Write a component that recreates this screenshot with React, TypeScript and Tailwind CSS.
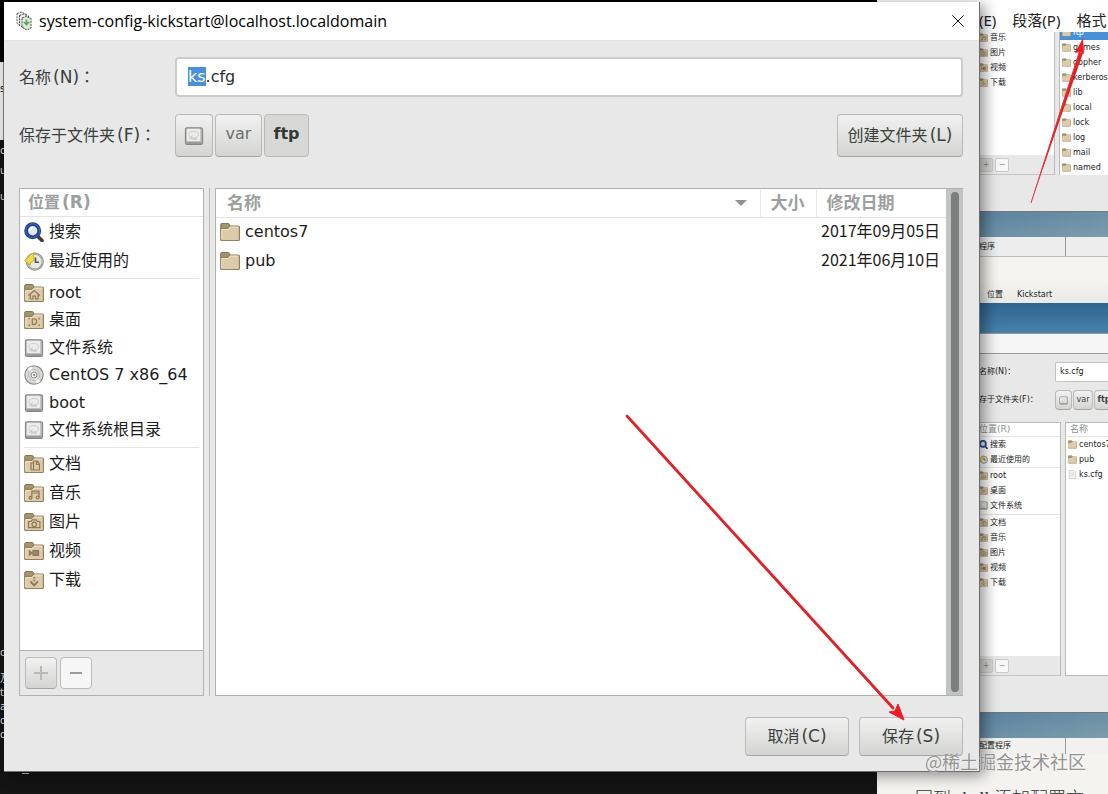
import { useEffect, useRef } from "react";
import type { ReactNode } from "react";

type IconName =
  | "search" | "recent" | "home" | "desktop" | "drive" | "disc"
  | "documents" | "music" | "pictures" | "videos" | "downloads" | "folder" | "file";

type Place = { icon: IconName; label: string };

const shortcuts: Place[] = [
  { icon: "search", label: "搜索" },
  { icon: "recent", label: "最近使用的" },
];
const devices: Place[] = [
  { icon: "home", label: "root" },
  { icon: "desktop", label: "桌面" },
  { icon: "drive", label: "文件系统" },
  { icon: "disc", label: "CentOS 7 x86_64" },
  { icon: "drive", label: "boot" },
  { icon: "drive", label: "文件系统根目录" },
];
const bookmarks: Place[] = [
  { icon: "documents", label: "文档" },
  { icon: "music", label: "音乐" },
  { icon: "pictures", label: "图片" },
  { icon: "videos", label: "视频" },
  { icon: "downloads", label: "下载" },
];
const files = [
  { name: "centos7", date: "2017年09月05日" },
  { name: "pub", date: "2021年06月10日" },
];

const emblems: Partial<Record<IconName, ReactNode>> = {
  home: <path d="M4.500 12.500 10.200 7.500l5.700 5M6.300 11.500V16h2.600v-3h2.600v3h2.600v-4.500" />,
  desktop: (
    <>
      <path d="M8.300 9h2.200c1.300 0 2 1 2 2.500s-.7 2.800-2 2.800H8.300z" />
      <path d="M4.500 8.500h1.500M4.500 15.200h1.500M14.500 8.500h1.500M14.500 15.200h1.500" strokeWidth="1.600" />
    </>
  ),
  documents: <path d="M7 16V9h2M7 16h3M9.500 7h3.500l2.500 3v6H9.500zM12.500 7v3.500h3" />,
  music: (
    <>
      <path d="M7.800 14.500V8.200h7.200v6M7.800 10h7.200" />
      <circle cx="6.500" cy="14.700" r="1.400" />
      <circle cx="13.700" cy="14.400" r="1.400" />
    </>
  ),
  pictures: (
    <>
      <path d="M4.500 9.500h2.700l1-1.700h4l1 1.700h2.700v6.200H4.500z" />
      <circle cx="10.200" cy="12.400" r="2.200" />
    </>
  ),
  videos: <path d="M9 9.500h5.500v5H9zM5.500 10l2.500 2-2.500 2z" fill="#9b8768" />,
  downloads: <path d="M10.200 7v1.400M10.200 9.800v1.500M6.500 11.500l3.700 3.800 3.700-3.800" strokeWidth="1.900" />,
};

function Icon({ name, className }: { name: IconName; className: string }) {
  if (name === "search")
    return (
      <svg viewBox="0 0 20 20" className={className} aria-hidden="true">
        <path d="m14 14.500 4 4" stroke="#3b3f45" strokeWidth="3.600" strokeLinecap="round" />
        <circle cx="8.700" cy="8.700" r="6.600" fill="#dfe8f5" stroke="#27408f" strokeWidth="3.800" />
        <circle cx="8.700" cy="8.700" r="6.900" fill="none" stroke="#4a68b8" strokeWidth="1" />
        <path d="M5.800 8.500a3 3 0 0 1 3-3" stroke="#fff" strokeWidth="1.600" fill="none" />
      </svg>
    );
  if (name === "recent")
    return (
      <svg viewBox="0 0 20 20" className={className} aria-hidden="true">
        <circle cx="10.800" cy="10.600" r="8" fill="#e9e9e4" stroke="#8f8f8a" strokeWidth="2.200" />
        <circle cx="10.800" cy="10.600" r="7.800" fill="none" stroke="#c9c9c4" strokeWidth=".8" />
        <path d="M11.500 6.500V11.200H15" stroke="#55554f" strokeWidth="1.600" fill="none" />
        <path d="M.6 9.500 4.500 6c.8-2.200 3-3.700 6-4-1.500 1.800-1 2.800-.6 4.300.7 2.500-1.200 4.700-3.500 5.500l-.2 2.400z" fill="#f0dc48" stroke="#b89b1b" strokeWidth=".8" />
      </svg>
    );
  if (name === "disc")
    return (
      <svg viewBox="0 0 20 20" className={className} aria-hidden="true">
        <circle cx="10" cy="10" r="9.200" fill="#d9d9d7" stroke="#868684" strokeWidth="1.100" />
        <path d="M10 10 3.500 4a9 9 0 0 1 4-2.500zM10 10l6.500 6a9 9 0 0 1-4 2.500z" fill="#fafafa" />
        <circle cx="10" cy="10" r="5.500" fill="none" stroke="#b5b5b2" strokeWidth=".8" />
        <circle cx="10" cy="10" r="3" fill="#f5f5f5" stroke="#8e8e8b" />
        <circle cx="10" cy="10" r="1" fill="#777" />
      </svg>
    );
  if (name === "drive")
    return (
      <svg viewBox="0 0 20 20" className={className} aria-hidden="true">
        <rect x="1.500" y="1.800" width="17" height="16.600" rx="1.600" fill="#bcbebc" stroke="#858785" strokeWidth="1.200" />
        <rect x="2.800" y="2.800" width="13.400" height="12.200" rx="1" fill="#ececeb" />
        <path d="M2.500 17h15" stroke="#8d8f8d" strokeWidth="1.400" />
        <ellipse cx="9.700" cy="8.700" rx="4.800" ry="3.200" fill="none" stroke="#cbcdcb" />
        <path d="m5 13 3.500-3.200M7 13h6" stroke="#b9bbb9" />
      </svg>
    );
  if (name === "file")
    return (
      <svg viewBox="0 0 20 20" className={className} aria-hidden="true">
        <path d="M3 1h10l4 4v14H3z" fill="#f4f4f2" stroke="#a8a8a5" />
        <path d="M6 7h8M6 10h8M6 13h8" stroke="#c4c4c1" />
      </svg>
    );
  return (
    <svg viewBox="0 0 20 20" className={className} aria-hidden="true">
      <path d="M.7 9V2.500c0-.6.4-1 1-1h6.500c.6 0 .9.300 1.100.8l.8 1.700v5z" fill="#a3956f" stroke="#877551" />
      <path d="M.7 17.500V7.200c0-.6.4-.9 1-.9h6L9.800 4h8.500c.7 0 1.100.4 1.100 1v12.500c0 .6-.4 1-1 1H1.700c-.6 0-1-.4-1-1z" fill="#dccbab" stroke="#94805c" strokeWidth="1.200" />
      <path d="M1.800 17V7.500h6.300L10.200 5.200h8" fill="none" stroke="#efe3ca" />
      <g fill="none" stroke="#8e7957" strokeWidth="1.200">{emblems[name]}</g>
    </svg>
  );
}

const buttonLook =
  "flex items-center justify-center rounded-[4px] border border-[#b9bbb8] border-b-[#a3a5a2] bg-linear-to-b from-[#f1f1f1] to-[#d4d5d2] text-[#3a3f3d]";

function Mnemonic({ children }: { children: string }) {
  return <span className="ml-[2px] text-[17px]">({children})</span>;
}

function PlaceGroup({ places, className }: { places: Place[]; className: string }) {
  return (
    <ul className={className}>
      {places.map((p) => (
        <li key={p.label} className="flex min-h-0 items-center gap-[5px] pl-1 text-base leading-5 text-[#1c1c1c]">
          <Icon name={p.icon} className="size-5 shrink-0" />
          <span className="whitespace-nowrap">{p.label}</span>
        </li>
      ))}
    </ul>
  );
}

function Rule() {
  return <hr className="mx-1 mt-[3px] border-[#e3e3e3]" />;
}

function SaveDialog() {
  const nameRef = useRef<HTMLInputElement>(null);
  useEffect(() => {
    nameRef.current?.focus();
    nameRef.current?.setSelectionRange(0, 2);
  }, []);

  return (
    <section
      role="dialog"
      aria-labelledby="dialog-title"
      className="absolute top-[2px] right-[128px] bottom-[22px] left-1 flex flex-col border-r border-b border-[#6c6c6c] bg-[#e8e8e8] shadow-[4px_3px_14px_rgba(0,0,0,0.45)]"
    >
      <header className="flex h-[39px] shrink-0 items-center border-b border-[#e2e2e2] bg-white pr-3 pl-3">
        <svg viewBox="0 0 16 20" className="h-5 w-4" fill="none" aria-hidden="true">
          <path d="M1 2.500 5 1l5 2v11l-4 1.500-5-3z" fill="#f2f2f2" stroke="#555" strokeDasharray="2 1" />
          <path d="m3.500 4.500 4-1.500 5 2v11l-4 1.500-5-3z" fill="#e7ece7" stroke="#444" strokeDasharray="2 1" />
          <path d="m6 7 4-1.500 5 2V17l-4 2-5-3z" fill="#dfe5df" stroke="#4d4d4d" strokeDasharray="2 1" />
          <path d="M10.500 8.500v5M8 11l2.500 2.700 2.500-2.700" stroke="#4cab4c" strokeWidth="1.500" />
        </svg>
        <h1 id="dialog-title" className="ml-[7px] flex-1 font-['Open_Sans'] text-base text-black">
          system-config-kickstart@localhost.localdomain
        </h1>
        <button type="button" aria-label="关闭" className="p-[3px]">
          <svg viewBox="0 0 12 12" className="size-3" stroke="#111" aria-hidden="true">
            <path d="M.3.3l11.400 11.400M11.700.3.3 11.700" />
          </svg>
        </button>
      </header>

      <form className="flex min-h-0 flex-1 flex-col pt-4 pr-4 pb-[15px] pl-[15px]" onSubmit={(e) => e.preventDefault()}>
        <div className="flex items-center">
          <label htmlFor="file-name" className="w-[156px] shrink-0 font-['DejaVu_Sans','Noto_Sans_CJK_TC',sans-serif] leading-6 text-[#3a3f3d]">
            名称<Mnemonic>N</Mnemonic>：
          </label>
          <input
            id="file-name"
            ref={nameRef}
            defaultValue="ks.cfg"
            className="h-10 min-w-0 flex-1 rounded-[4px] border-2 border-[#cbccca] bg-white px-[11px] pb-[2px] text-[#2b2f2e] caret-transparent outline-none selection:bg-[#4a90d9] selection:text-white"
          />
        </div>

        <div className="mt-[17px] flex items-center">
          <span className="w-[156px] shrink-0 font-['DejaVu_Sans','Noto_Sans_CJK_TC',sans-serif] leading-6 text-[#3a3f3d]">
            保存于文件夹<Mnemonic>F</Mnemonic>：
          </span>
          <nav className="flex h-[43px] gap-[2px]" aria-label="路径">
            <button type="button" aria-label="文件系统" className={`w-[38px] ${buttonLook}`}>
              <Icon name="drive" className="size-5" />
            </button>
            <button type="button" className={`w-[47px] pb-1 ${buttonLook}`}>
              <span className="text-[#6b6f6d]">var</span>
            </button>
            <button type="button" className="w-[45px] rounded-[4px] border border-[#b9bbb8] bg-[#d8d9d6] pb-1 font-bold text-[#333836]">
              ftp
            </button>
          </nav>
          <button type="button" className={`ml-auto h-[43px] w-[126px] ${buttonLook}`}>创建文件夹<Mnemonic>L</Mnemonic></button>
        </div>

        <div className="mt-[31px] flex min-h-0 flex-1">
          <aside className="flex w-[185px] shrink-0 flex-col border border-[#b0b2b0] bg-white">
            <h2 className="h-7 shrink-0 border-b border-[#e3e3e3] pl-2 leading-[27px] font-bold text-[#9b9f9d]">
              位置<Mnemonic>R</Mnemonic>
            </h2>
            <PlaceGroup places={shortcuts} className="grid h-[58px] shrink-0" />
            <Rule />
            <PlaceGroup places={devices} className="grid h-[165px] shrink-0" />
            <Rule />
            <PlaceGroup places={bookmarks} className="mt-[2px] grid h-36 shrink-0" />
            <footer className="mt-auto flex shrink-0 gap-[3px] border-t border-[#b0b2b0] bg-[#e8e8e8] px-[5px] py-[6px]">
              <button type="button" aria-label="添加" className={`size-8 ${buttonLook}`}>
                <svg viewBox="0 0 14 14" className="size-[14px]" stroke="#b8bab8" strokeWidth="2" aria-hidden="true"><path d="M7 0v14M0 7h14" /></svg>
              </button>
              <button type="button" aria-label="移除" className="flex size-8 items-center justify-center rounded-[4px] border border-[#b9bbb8] bg-[#f6f6f6]">
                <svg viewBox="0 0 14 4" className="h-1 w-[14px]" stroke="#9a9c9a" strokeWidth="2" aria-hidden="true"><path d="M1 2h12" /></svg>
              </button>
            </footer>
          </aside>
          <div className="w-[11px] shrink-0 border-r border-transparent">
            <div className="ml-[5px] h-full w-px bg-[#b8bab8]" />
          </div>
          <div className="flex min-w-0 flex-1 border border-r-0 border-[#b0b2b0] bg-white">
            <div className="min-w-0 flex-1">
              <table className="w-full table-fixed border-collapse text-left">
                <colgroup>
                  <col />
                  <col className="w-14" />
                  <col className="w-[130px]" />
                </colgroup>
                <thead>
                  <tr className="h-7 border-b border-[#e3e3e3] text-[17px] leading-5 text-[#9b9f9d]">
                    <th className="p-0 pr-[13px] pl-[11px]">
                      <div className="flex items-center justify-between">
                        名称
                        <svg viewBox="0 0 12 6" className="h-[6px] w-3" fill="#8f9391" aria-hidden="true"><path d="M0 0h12L6 6z" /></svg>
                      </div>
                    </th>
                    <th className="border-l border-[#e8e8e8] p-0 pl-[10px]">大小</th>
                    <th className="border-l border-[#e8e8e8] p-0 pl-[10px]">修改日期</th>
                  </tr>
                </thead>
                <tbody className="leading-5 text-[#1c1c1c]">
                  {files.map((f) => (
                    <tr key={f.name} className="h-[29px]">
                      <td className="p-0 pl-1">
                        <div className="flex items-center gap-[5px]">
                          <Icon name="folder" className="size-5" />
                          {f.name}
                        </div>
                      </td>
                      <td className="p-0" />
                      <td className="p-0 pb-[3px] pl-[5px] font-['Noto_Sans_CJK_SC',sans-serif] whitespace-nowrap">{f.date}</td>
                    </tr>
                  ))}
                </tbody>
              </table>
            </div>
            <div className="flex w-[17px] shrink-0 justify-center bg-[#c2c4c3] py-[3px]">
              <div className="w-2 rounded-full bg-[#7a7f7c]" />
            </div>
          </div>
        </div>

        <div className="mt-[21px] flex justify-end gap-[10px]">
          <button type="button" className={`h-[39px] w-[104px] ${buttonLook}`}>取消<Mnemonic>C</Mnemonic></button>
          <button type="submit" className={`h-[39px] w-[104px] ${buttonLook}`}>保存<Mnemonic>S</Mnemonic></button>
        </div>
      </form>
    </section>
  );
}

const miniRow = "flex h-[15px] items-center gap-[2px] whitespace-nowrap";
const miniSquare = "flex size-[14px] items-center justify-center rounded-[2px] border border-[#c9cac8]";

function MiniPlaces({ places }: { places: Place[] }) {
  return (
    <ul>
      {places.map((p) => (
        <li key={p.label} className={miniRow}>
          <Icon name={p.icon} className="size-[9px] shrink-0" />
          {p.label}
        </li>
      ))}
    </ul>
  );
}

function MiniFooter() {
  return (
    <div className="flex h-5 items-center gap-[2px] border-b border-[#c4c5c4] bg-[#e8e8e8] text-[#8d8f8d]">
      <span className={`bg-[#d8d9d6] ${miniSquare}`}>+</span>
      <span className={`bg-[#f8f8f8] ${miniSquare}`}>−</span>
    </div>
  );
}

function MiniTaskbar({ className, label }: { className: string; label: string }) {
  return (
    <div className={className}>
      <span className="flex h-full w-[87px] items-center border-r border-[#9a9a9a] whitespace-nowrap">{label}</span>
    </div>
  );
}

function DocumentPane() {
  return (
    <article className="flex w-[231px] shrink-0 flex-col overflow-hidden bg-[#f4f3f0]">
      <div className="flex h-8 shrink-0 items-end gap-4 bg-white pb-[1px] pl-[102px] font-['Noto_Sans','Noto_Sans_CJK_SC',sans-serif] text-[15px] leading-[22px] whitespace-nowrap text-[#222]">
        <span>(E)</span>
        <span>段落(P)</span>
        <span>格式</span>
      </div>
      <div className="ml-[102px] flex flex-col bg-[#e8e8e8] text-[8px] leading-3 text-[#222]">
        <div className="flex h-[143px] shrink-0 overflow-hidden">
          <div className="flex w-[76px] shrink-0 flex-col border-r border-[#b8bab8] bg-white">
            <div className="-mt-[2px]"><MiniPlaces places={bookmarks.slice(1)} /></div>
            <div className="mt-auto"><MiniFooter /></div>
          </div>
          <div className="ml-1 flex-1 overflow-hidden border-l border-[#b8bab8] bg-white">
            <ul className="-mt-[7px]">
              {["ftp", "games", "gopher", "kerberos", "lib", "local", "lock", "log", "mail", "named"].map((n) => (
                <li key={n} className={n === "ftp" ? `bg-[#4a90d9] pl-[2px] text-white ${miniRow}` : `pl-[2px] ${miniRow}`}>
                  <Icon name="folder" className="size-[9px] shrink-0" />
                  {n}
                </li>
              ))}
            </ul>
          </div>
        </div>
        <div className="h-[37px] shrink-0 border-b border-[#777]" />
        <div className="h-[25px] shrink-0 bg-linear-to-br from-[#5a83a0] to-[#7d9cab]" />
        <MiniTaskbar label="程序" className="h-5 shrink-0 border-b border-[#bbb] bg-[#ededed]" />
        <div className="flex h-[46px] shrink-0 items-end gap-[14px] bg-linear-to-b from-[#f5f4ef] from-50% to-[#e9e9e8] pb-[2px] pl-2">
          <span>位置</span>
          <span>Kickstart</span>
        </div>
        <div className="h-[30px] shrink-0 bg-linear-to-b from-[#30658f] to-[#4781ab]" />
        <div className="h-[21px] shrink-0 border-t border-b border-[#999] bg-[#f5f5f5]" />
        <div className="flex h-9 shrink-0 items-center justify-between">
          <span className="whitespace-nowrap">名称(N)：</span>
          <span className="flex h-5 w-[53px] items-center rounded-l-[2px] border border-r-0 border-[#c3c4c2] bg-white pl-1">ks.cfg</span>
        </div>
        <div className="flex h-5 shrink-0 items-center justify-between">
          <span className="whitespace-nowrap">存于文件夹(F)：</span>
          <span className="flex h-5 w-[53px] gap-px overflow-hidden">
            <span className={`w-[17px] shrink-0 ${buttonLook}`}><Icon name="drive" className="size-[9px]" /></span>
            <span className={`w-5 shrink-0 ${buttonLook}`}>var</span>
            <span className={`w-5 shrink-0 font-bold ${buttonLook}`}>ftp</span>
          </span>
        </div>
        <div className="mt-3 flex h-[254px] shrink-0">
          <div className="flex w-[82px] shrink-0 flex-col border-t border-r border-[#b8bab8] bg-white">
            <div className="h-[14px] border-b border-[#e3e3e3] text-[9px] text-[#8b8f8d]">位置(R)</div>
            <MiniPlaces places={shortcuts} />
            <hr className="border-[#e3e3e3]" />
            <MiniPlaces places={devices.slice(0, 3)} />
            <hr className="mt-[1px] border-[#e3e3e3]" />
            <MiniPlaces places={bookmarks} />
            <div className="mt-auto"><MiniFooter /></div>
          </div>
          <div className="ml-1 flex-1 overflow-hidden border-t border-b border-l border-[#b8bab8] bg-white">
            <div className="h-[14px] border-b border-[#e3e3e3] pl-1 text-[9px] text-[#8b8f8d]">名称</div>
            <div className={`pl-[2px] ${miniRow}`}><Icon name="folder" className="size-[9px] shrink-0" />centos7</div>
            <div className={`pl-[2px] ${miniRow}`}><Icon name="folder" className="size-[9px] shrink-0" />pub</div>
            <div className={`pl-[2px] ${miniRow}`}><Icon name="file" className="size-[9px] shrink-0" />ks.cfg</div>
          </div>
        </div>
        <div className="h-[37px] shrink-0 border-b border-[#777]" />
        <div className="h-[25px] shrink-0 bg-linear-to-br from-[#5a83a0] to-[#7d9cab]" />
        <MiniTaskbar label="配置程序" className="h-4 shrink-0 bg-[#f1f1ef]" />
      </div>
      <p className="mt-[31px] ml-[38px] font-['Liberation_Serif','Noto_Sans_CJK_SC',serif] text-lg leading-7 font-light whitespace-nowrap text-[#333]">
        回到 shell 添加配置文
      </p>
    </article>
  );
}

function TerminalPane() {
  return (
    <div className="relative flex min-w-0 flex-1 flex-col bg-[#141414] text-[10px] leading-[14px] text-[#ddd]">
      <div className="h-[62px] shrink-0 bg-black" />
      <div className="h-[78px] w-1 shrink-0 overflow-hidden border-r border-[#888] bg-[#f0f0f0] pt-5 text-black">s</div>
      <div className="w-1 flex-1 overflow-hidden">
        <p className="mt-1">c</p>
        <p className="mt-[6px]">u</p>
        <p className="mt-3">u</p>
      </div>
      <div className="mb-[52px] w-1 overflow-hidden">
        <p>o</p>
        <p className="mt-3">及</p>
        <p>t</p>
        <p>a</p>
        <p>o</p>
        <p>o</p>
      </div>
      <div className="absolute bottom-[20px] left-[22px] h-px w-[7px] bg-[#ccc]" />
    </div>
  );
}

export default function App() {
  return (
    <main className="relative flex h-screen overflow-hidden bg-[#141414] font-['DejaVu_Sans','Noto_Sans_CJK_SC',sans-serif] text-base">
      <TerminalPane />
      <DocumentPane />
      <SaveDialog />
      <svg className="pointer-events-none absolute inset-0 size-full" aria-hidden="true">
        <path d="M627 416 893 708" stroke="#e02128" strokeWidth="2.800" strokeLinecap="round" />
        <path d="M904 720 889 712l6-1 3-7z" fill="#ee1c25" stroke="#ee1c25" />
        <path d="M1031 203 1079 52l4 1z" fill="#e02128" />
        <path d="M1031 203 1080 50" stroke="#e8343a" />
        <path d="m1083 38 1 16-4-2-5 1z" fill="#ee1c25" />
      </svg>
      <p className="pointer-events-none absolute right-[22px] bottom-[21px] font-['Noto_Sans_CJK_SC',sans-serif] text-lg leading-6 whitespace-nowrap text-[#858585]/90 text-shadow-[0_0_1px_#fff]">
        @稀土掘金技术社区
      </p>
    </main>
  );
}
